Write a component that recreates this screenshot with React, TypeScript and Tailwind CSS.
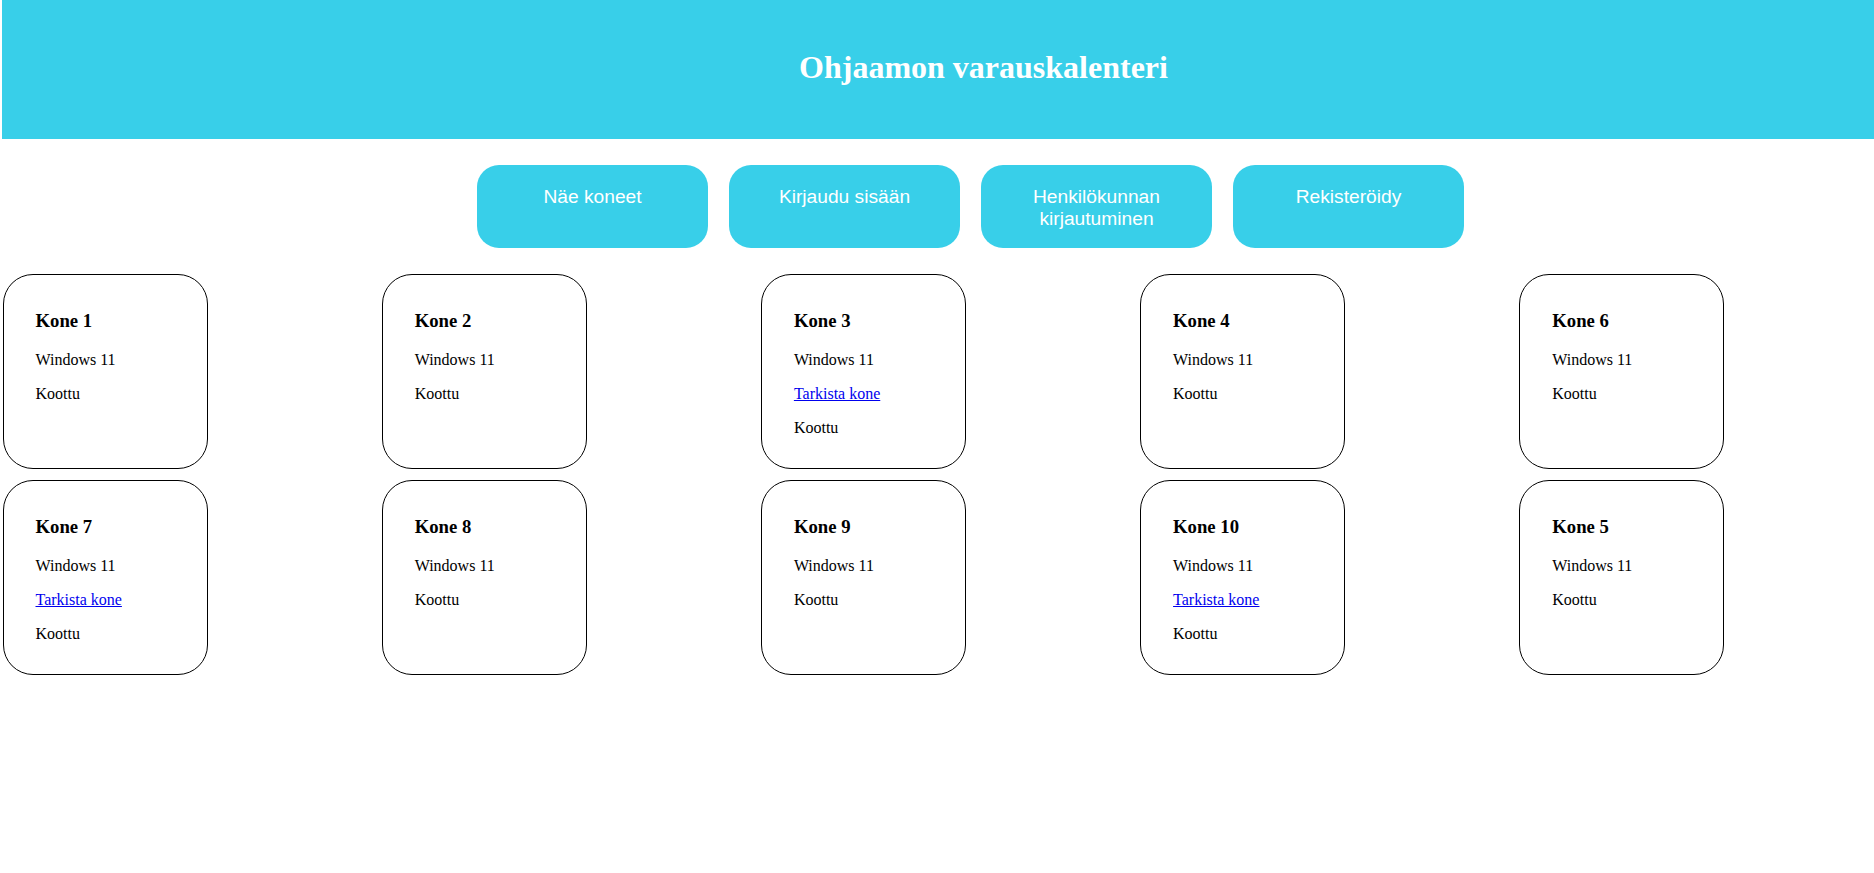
import React from 'react';

type Machine = {
  name: string;
  os: string;
  check?: boolean;
  status: string;
};

const machines: Machine[] = [
  { name: 'Kone 1', os: 'Windows 11', status: 'Koottu' },
  { name: 'Kone 2', os: 'Windows 11', status: 'Koottu' },
  { name: 'Kone 3', os: 'Windows 11', check: true, status: 'Koottu' },
  { name: 'Kone 4', os: 'Windows 11', status: 'Koottu' },
  { name: 'Kone 6', os: 'Windows 11', status: 'Koottu' },
  { name: 'Kone 7', os: 'Windows 11', check: true, status: 'Koottu' },
  { name: 'Kone 8', os: 'Windows 11', status: 'Koottu' },
  { name: 'Kone 9', os: 'Windows 11', status: 'Koottu' },
  { name: 'Kone 10', os: 'Windows 11', check: true, status: 'Koottu' },
  { name: 'Kone 5', os: 'Windows 11', status: 'Koottu' },
];

const navItems = ['Näe koneet', 'Kirjaudu sisään', 'Henkilökunnan kirjautuminen', 'Rekisteröidy'];

const MachineCard = ({ machine }: { machine: Machine }) => (
  <div className="h-[195px] w-[205px] rounded-[30px] border border-black bg-white px-8 pt-[17px] text-black">
    <h3 className="mt-[18.72px] mb-[18.72px] text-[18.72px] leading-[normal] font-bold">{machine.name}</h3>
    <p className="my-4 text-[16px] leading-[normal]">{machine.os}</p>
    {machine.check && (
      <p className="my-4 text-[16px] leading-[normal]">
        <a href="#" className="text-[#0000ee] underline">
          Tarkista kone
        </a>
      </p>
    )}
    <p className="my-4 text-[16px] leading-[normal]">{machine.status}</p>
  </div>
);

export default function App() {
  return (
    <div className="min-h-screen overflow-hidden bg-white font-['Liberation_Serif','Times_New_Roman',serif]">
      {/* Header */}
      <header className="ml-[2px] flex h-[139px] items-center justify-center bg-[#38cfe9] pb-[5px] pl-[91px]">
        <h1 className="text-[32px] leading-[normal] font-bold text-white">Ohjaamon varauskalenteri</h1>
      </header>

      {/* Navigation */}
      <nav className="mt-[26px] flex justify-center gap-[21px] pl-[67px]">
        {navItems.map((item) => (
          <button
            key={item}
            className="flex w-[231px] items-start justify-center rounded-[22px] bg-[#38cfe9] px-[19.2px] pt-[20.5px] pb-[18px] text-center font-['Liberation_Sans',Arial,sans-serif] text-[19.2px] leading-[normal] text-white"
          >
            {item}
          </button>
        ))}
      </nav>

      {/* Machines */}
      <div className="mt-[26px] grid grid-cols-[repeat(5,205px)] gap-x-[174.2px] gap-y-[11px] pl-[2.5px]">
        {machines.map((m) => (
          <MachineCard key={m.name} machine={m} />
        ))}
      </div>
    </div>
  );
}
